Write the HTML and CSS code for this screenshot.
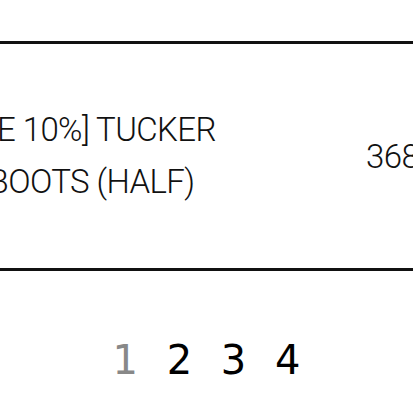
FILE: index.html
```html
<!DOCTYPE html>
<html>
<head>
<meta name="viewport" content="width=device-width, initial-scale=1.0">
<link rel="stylesheet" href="styles.css">
</head>
<body>
<div class="cart-wrap">
	<div class="cart-row">
		<div class="item-name">[SALE 10%] TUCKER<br>ZIP BOOTS (HALF)</div>
		<div class="item-price">368,000</div>
	</div>
</div>
<div class="pager">
	<a class="current">1</a>
	<a>2</a>
	<a>3</a>
	<a>4</a>
</div>
</body>
</html>
```

FILE: styles.css
```css
body {
	margin: 0;
	overflow: hidden;
	background: #fff;
}
.cart-wrap {
	padding-top: 41px;
	overflow: hidden;
}
.cart-row {
	display: flex;
	align-items: center;
	width: 700px;
	height: 224px;
	margin-left: -66px;
	border-top: 3px solid #111;
	border-bottom: 3px solid #111;
}
.item-name {
	flex: 0 0 432px;
	font-family: Roboto, "Liberation Sans", sans-serif;
	font-weight: 300;
	font-size: 33px;
	line-height: 52px;
	letter-spacing: -0.6px;
	color: #111;
}
.item-price {
	font-family: Roboto, "Liberation Sans", sans-serif;
	font-weight: 300;
	font-size: 33px;
	letter-spacing: -0.6px;
	color: #111;
}
.pager {
	margin-top: 69px;
	text-align: center;
	font-family: "DejaVu Sans", sans-serif;
	font-size: 40px;
	line-height: 1;
}
.pager a {
	margin: 0 8px;
	color: #000;
}
.pager a.current {
	color: #888;
}
```
